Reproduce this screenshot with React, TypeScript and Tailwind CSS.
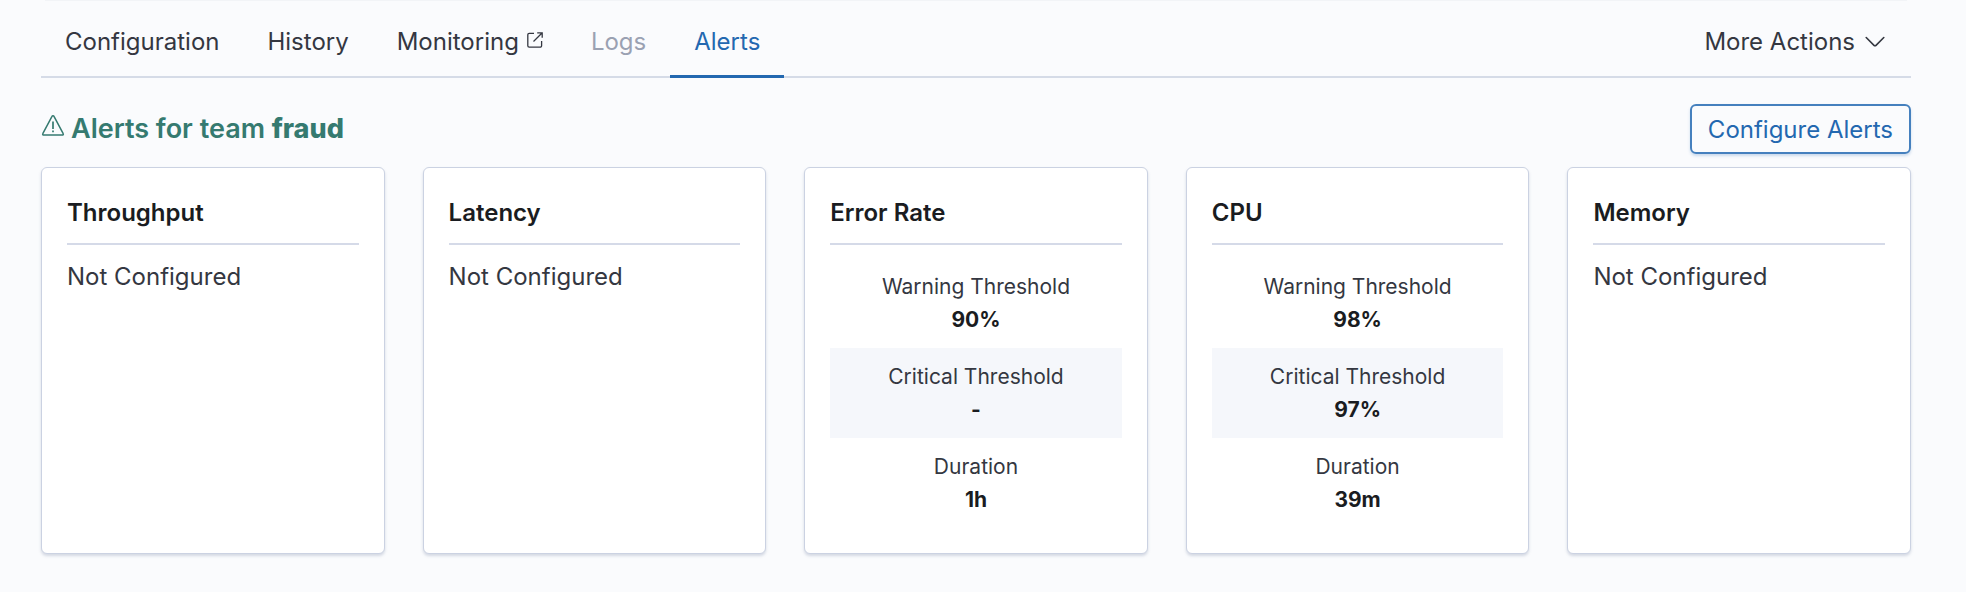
import type { ReactNode } from "react";

type Threshold = { label: string; value: string };
type AlertMetric = { title: string; thresholds?: Threshold[] };

const metrics: AlertMetric[] = [
  { title: "Throughput" },
  { title: "Latency" },
  {
    title: "Error Rate",
    thresholds: [
      { label: "Warning Threshold", value: "90%" },
      { label: "Critical Threshold", value: "-" },
      { label: "Duration", value: "1h" },
    ],
  },
  {
    title: "CPU",
    thresholds: [
      { label: "Warning Threshold", value: "98%" },
      { label: "Critical Threshold", value: "97%" },
      { label: "Duration", value: "39m" },
    ],
  },
  { title: "Memory" },
];

function PopoutIcon() {
  return (
    <svg viewBox="0 0 16 16" className="mb-1 size-4" fill="none" stroke="currentColor" strokeWidth="1.3" aria-hidden="true">
      <path d="M7 1.3H2.2A1.4 1.4 0 0 0 .8 2.7v11a1.4 1.4 0 0 0 1.4 1.4h11a1.4 1.4 0 0 0 1.4-1.4V9" />
      <path d="M10.2.8h5V5.8M15 1 6.5 9.5" />
    </svg>
  );
}

function ChevronIcon() {
  return (
    <svg viewBox="0 0 20 12" className="h-3 w-5" fill="none" stroke="currentColor" strokeWidth="1.6" strokeLinecap="round" aria-hidden="true">
      <path d="M1.2 1.5 9 9.4a1.4 1.4 0 0 0 2 0l7.8-7.9" />
    </svg>
  );
}

function WarningIcon() {
  return (
    <svg viewBox="0 0 24 24" className="mb-1.5 size-6" fill="none" stroke="currentColor" strokeWidth="1.5" aria-hidden="true">
      <path d="M11 2.4 1.8 19.6a1 1 0 0 0 .9 1.5h18.6a1 1 0 0 0 .9-1.5L13 2.4a1.1 1.1 0 0 0-2 0z" />
      <path d="M12 7.6v7.4M12 16.6v1.6" strokeWidth="1.7" />
    </svg>
  );
}

function Tab({ children, selected, disabled }: { children: ReactNode; selected?: boolean; disabled?: boolean }) {
  return (
    <button
      type="button"
      role="tab"
      aria-selected={!!selected}
      disabled={disabled}
      className={
        "flex items-center gap-2 border-b-3 px-6 pb-3.5 " +
        (selected
          ? "border-[#2368b0] text-[#2368b0]"
          : disabled
            ? "border-transparent text-[#9aa1b2]"
            : "border-transparent text-[#343741]")
      }
    >
      {children}
    </button>
  );
}

function MetricCard({ title, thresholds }: AlertMetric) {
  return (
    <section className="min-w-0 flex-1 rounded-md border border-[#cbd2e2] bg-white p-[25px] shadow-[0_2px_3px_rgba(100,115,150,0.25)]">
      <h3 className="border-b-2 border-[#d5dae8] pt-px pb-[11px] leading-[38px] font-semibold text-[#1a1c21]">{title}</h3>
      {thresholds ? (
        <dl className="pt-[13px] text-center text-[21px] leading-[33px]">
          {thresholds.map((t) => (
            <div key={t.label} className="py-3 even:bg-[#f5f7fb]">
              <dt>{t.label}</dt>
              <dd className="font-bold text-[#1a1c21]">{t.value}</dd>
            </div>
          ))}
        </dl>
      ) : (
        <p className="pt-[13px] leading-[38px]">Not Configured</p>
      )}
    </section>
  );
}

export default function App() {
  return (
    <main className="min-h-screen bg-[#fafbfd] pr-[55px] pb-9 pl-[41px] font-['Inter','Liberation_Sans',sans-serif] text-2xl leading-[38px] text-[#343741]">
      <div className="mx-1 h-px bg-[#f2f4f7]" />
      <div className="flex items-stretch justify-between pt-[22px] shadow-[inset_0_-2px_0_#d5dbe7]">
        <div role="tablist" className="flex">
          <Tab>Configuration</Tab>
          <Tab>History</Tab>
          <Tab>
            Monitoring
            <PopoutIcon />
          </Tab>
          <Tab disabled>Logs</Tab>
          <Tab selected>Alerts</Tab>
        </div>
        <button type="button" className="flex items-center gap-[10px] border-b-3 border-transparent px-[26px] pb-3.5">
          More Actions
          <ChevronIcon />
        </button>
      </div>
      <div className="flex items-center justify-between pt-[26px] pb-[13px]">
        <h2 className="flex items-center gap-1.5 text-[27px] font-semibold text-[#357a70]">
          <WarningIcon />
          <span>
            Alerts for team <strong className="font-extrabold">fraud</strong>
          </span>
        </h2>
        <button
          type="button"
          className="h-[50px] rounded-md border-2 border-[#4580be] px-4 pt-px text-[#2368b0] shadow-[0_2px_3px_rgba(35,104,176,0.22)]"
        >
          Configure Alerts
        </button>
      </div>
      <div className="flex gap-[38px]">
        {metrics.map((m) => (
          <MetricCard key={m.title} {...m} />
        ))}
      </div>
    </main>
  );
}
